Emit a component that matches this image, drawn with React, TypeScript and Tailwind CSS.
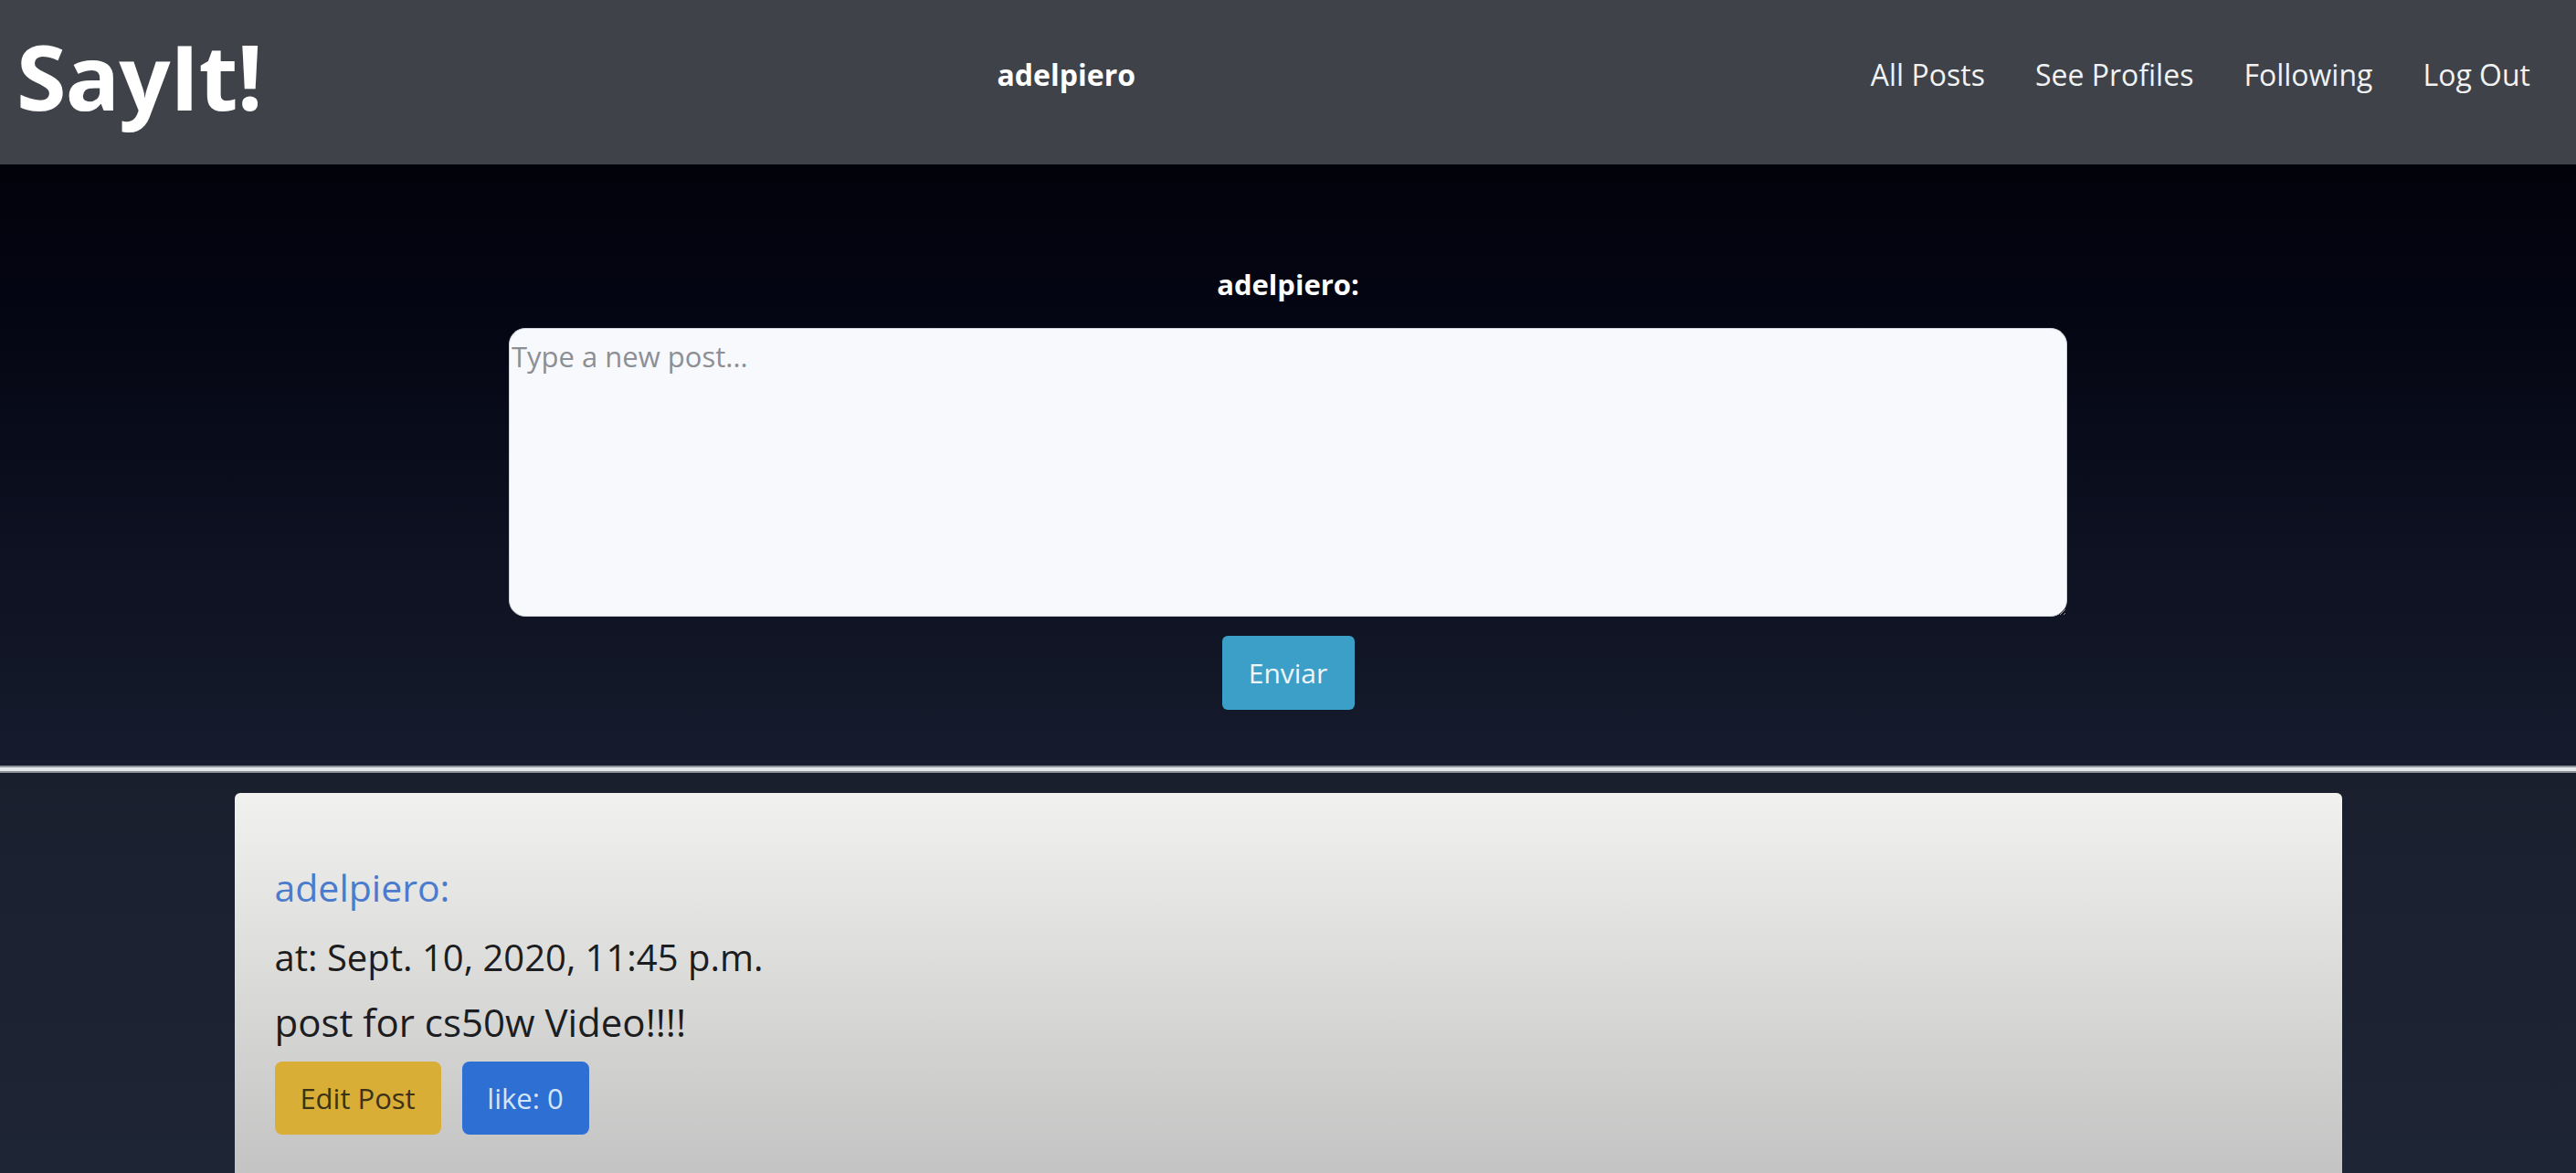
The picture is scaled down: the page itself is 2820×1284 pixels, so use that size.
import React from 'react'

const font = { fontFamily: '"Open Sans", "Noto Sans", sans-serif' }

const NavBar = () => (
  <nav className="flex h-[180px] items-center justify-between bg-[#3f4248] pb-[16px] pl-[18px] pr-[50px]">
    <a className="text-[99px] font-bold leading-[99px] tracking-[-1px] text-white">SayIt!</a>
    <span className="text-[32px] font-bold text-white">adelpiero</span>
    <ul className="flex items-center gap-[55px] text-[32px] text-[#f1f2f4]">
      <li>All Posts</li>
      <li>See Profiles</li>
      <li>Following</li>
      <li>Log Out</li>
    </ul>
  </nav>
)

const NewPost = () => (
  <section className="flex flex-col items-center bg-linear-to-b from-[#02020b] via-[#0a0d1c] to-[#161c2d] pb-[61px] pt-[111px]">
    <label className="text-[31px] font-bold leading-[40px] text-white">adelpiero:</label>
    <textarea
      className="mt-[28px] h-[316px] w-[1706px] resize rounded-[18px] border border-[#cfd3da] bg-[#f8f9fc] pl-[2px] pt-[10px] text-[31px] leading-[40px] text-[#222] outline-none placeholder:text-[#8c8f95]"
      placeholder="Type a new post..."
    />
    <button className="mt-[21px] h-[81px] w-[145px] rounded-[6px] bg-[#3c9fc7] text-[30px] text-[#eef7fb]">
      Enviar
    </button>
  </section>
)

const PostCard = () => (
  <div className="mx-auto mt-[22px] h-[460px] w-[2307px] rounded-t-[6px] bg-linear-to-b from-[#f1f1ef] to-[#bfbfbf] px-[44px] pt-[79px]">
    <p className="text-[41px] leading-[48px] text-[#4a7bcd]">adelpiero:</p>
    <p className="mt-[29px] text-[40px] font-medium leading-[48px] text-[#1c1d20]">
      at: Sept. 10, 2020, 11:45 p.m.
    </p>
    <p className="mt-[23px] text-[42px] leading-[48px] text-[#1c1d20]">post for cs50w Video!!!!</p>
    <div className="mt-[19px] flex gap-[23px]">
      <button className="h-[80px] w-[182px] rounded-[8px] bg-[#d9ae36] text-[31px] text-[#3b3218]">Edit Post</button>
      <button className="h-[80px] w-[139px] rounded-[8px] bg-[#2d6fd2] text-[31px] text-[#d3e5f8]">like: 0</button>
    </div>
  </div>
)

export default function App() {
  return (
    <div style={font} className="h-[1284px] w-[2820px] overflow-hidden bg-[#1b2131]">
      <NavBar />
      <NewPost />
      <div className="h-[8px] border-y-2 border-[#8f949c] bg-[#e4e6ea]" />
      <div className="h-[438px] overflow-hidden bg-linear-to-b from-[#1a1f2e] to-[#1e2534]">
        <PostCard />
      </div>
    </div>
  )
}
